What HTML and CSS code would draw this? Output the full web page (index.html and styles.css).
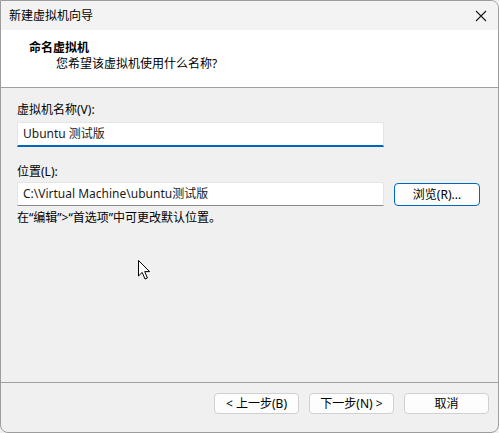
FILE: index.html
```html
<!DOCTYPE html>
<html lang="zh-CN">
<head>
    <meta charset="UTF-8">
    <title>新建虚拟机向导</title>
    <link rel="stylesheet" href="styles.css">
</head>
<body>

<div class="window">
    <div class="titlebar">
        <span class="title">新建虚拟机向导</span>
        <svg class="close" width="12" height="12" viewBox="0 0 12 12">
            <path d="M1 1 L11 11 M11 1 L1 11" stroke="#1a1a1a" stroke-width="1.1" fill="none"/>
        </svg>
    </div>

    <div class="header">
        <div class="header-title">命名虚拟机</div>
        <div class="header-sub">您希望该虚拟机使用什么名称?</div>
    </div>

    <div class="content">
        <div class="label label-first">虚拟机名称(V):</div>
        <div class="field field-name">Ubuntu 测试版</div>

        <div class="label label-second">位置(L):</div>
        <div class="row">
            <div class="field field-path">C:\Virtual Machine\ubuntu测试版</div>
            <button class="btn btn-browse">浏览(R)...</button>
        </div>

        <div class="hint">在“编辑”&gt;“首选项”中可更改默认位置。</div>

        <!-- mouse pointer -->
        <svg class="pointer" width="14" height="21" viewBox="0 0 14 21">
            <path d="M0.5 0.5 L0.5 16 L4.2 12.4 L7 19 L9.4 18 L6.7 11.6 L11.6 11.6 Z" fill="#fff" stroke="#000" stroke-width="1" stroke-linejoin="round"/>
        </svg>
    </div>

    <div class="footer">
        <button class="btn">&lt; 上一步(B)</button>
        <button class="btn">下一步(N) &gt;</button>
        <button class="btn">取消</button>
    </div>
</div>

</body>
</html>
```

FILE: styles.css
```css
body {
    margin: 0;
    font-family: "Noto Sans", "Noto Sans CJK SC", sans-serif;
    font-size: 12px;
    color: #000;
    background-color: #f0f0f0;
}

.window {
    width: 499px;
    height: 433px;
    box-sizing: border-box;
    border: 1px solid #9c9c9c;
    border-radius: 0 8px 8px 8px;
    overflow: hidden;
    display: flex;
    flex-direction: column;
    background-color: #f0f0f0;
}

.titlebar {
    height: 29px;
    flex-shrink: 0;
    background-color: #f3f3f3;
    display: flex;
    align-items: center;
    justify-content: space-between;
    padding: 0 11px 0 8px;
}

.title {
    line-height: 16px;
}

.header {
    height: 57px;
    flex-shrink: 0;
    background-color: #fff;
    border-bottom: 1px solid #a0a0a0;
}

.header-title {
    font-weight: bold;
    margin: 10px 0 0 28px;
    line-height: 16px;
}

.header-sub {
    margin: 0 0 0 55px;
    line-height: 16px;
}

.content {
    flex: 1;
    position: relative;
    padding: 14px 0 0 16px;
}

.label {
    line-height: 16px;
}

.label-first {
    margin-bottom: 4px;
}

.label-second {
    margin-top: 17px;
    margin-bottom: 2px;
}

.field {
    width: 367px;
    box-sizing: border-box;
    background-color: #fff;
    border: 1px solid #e5e5e5;
    border-radius: 2px 2px 0 0;
    padding: 0 5px;
    line-height: 16px;
    color: #1a1a1a;
}

.field-name {
    height: 25px;
    padding-top: 3px;
    border-bottom: 2px solid #0067c0;
}

.field-path {
    height: 24px;
    padding-top: 3px;
    border-bottom: 1px solid #8a8a8a;
}

.row {
    display: flex;
    align-items: flex-start;
    gap: 10px;
}

.btn {
    font-family: "Noto Sans", "Noto Sans CJK SC", sans-serif;
    font-size: 12px;
    color: #000;
    background-color: #fdfdfd;
    border: 1px solid #d0d0d0;
    border-radius: 4px;
    height: 21px;
    width: 85px;
    padding: 0;
    line-height: 16px;
}

.btn-browse {
    margin-top: 1px;
    height: 23px;
    width: 86px;
    border-color: #0067c0;
}

.hint {
    margin-top: 4px;
    line-height: 16px;
}

.pointer {
    position: absolute;
    left: 137px;
    top: 172px;
}

.footer {
    height: 39px;
    flex-shrink: 0;
    border-top: 1px solid #a0a0a0;
    display: flex;
    justify-content: flex-end;
    align-items: flex-start;
    gap: 10px;
    padding: 10px 9px 0 0;
}
```
